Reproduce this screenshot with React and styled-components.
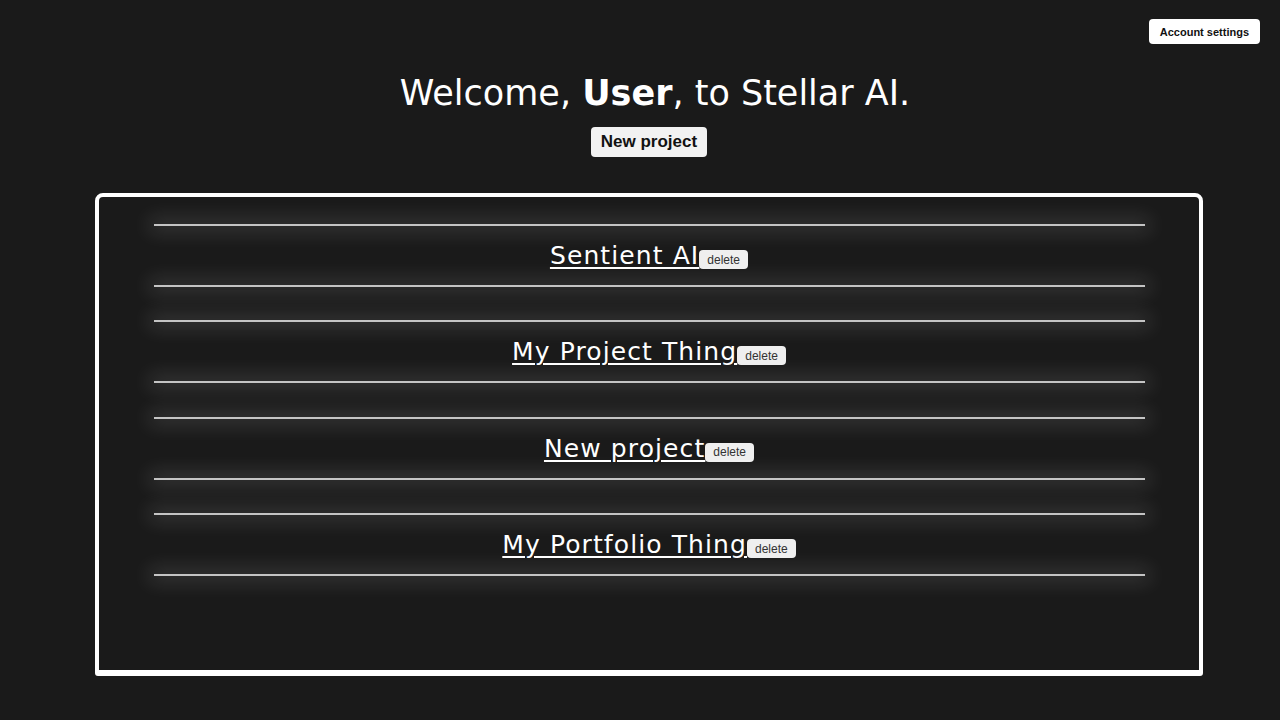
import React from "react";
import styled, { createGlobalStyle } from "styled-components";

const GlobalStyle = createGlobalStyle`
  html, body { margin: 0; padding: 0; background: #1a1a1a; }
  body { font-family: "Liberation Sans", Arial, sans-serif; color: #fff; }
`;

const Page = styled.div`
  min-height: 720px;
  display: flex;
  flex-direction: column;
  align-items: center;
  padding-left: 18px;
  box-sizing: border-box;
`;

const TopBar = styled.div`
  align-self: stretch;
  display: flex;
  justify-content: flex-end;
  padding: 19px 20px 0 0;
  height: 25px;
`;

const SmallButton = styled.button`
  font-family: "Liberation Sans", Arial, sans-serif;
  font-weight: 700;
  font-size: 11px;
  color: #111;
  background: #fff;
  border: none;
  border-radius: 4px;
  padding: 0 11px;
  height: 25px;
  cursor: pointer;
`;

const Heading = styled.h1`
  margin: 29px 0 0 12px;
  font-family: "DejaVu Sans", sans-serif;
  font-weight: 400;
  font-size: 35px;
  letter-spacing: 0px;
  line-height: 40px;
  color: #fff;
  b { font-weight: 700; }
`;

const NewButton = styled.button`
  margin-top: 14px;
  font-family: "Liberation Sans", Arial, sans-serif;
  font-weight: 700;
  font-size: 17px;
  color: #111;
  background: #f2f2f2;
  border: none;
  border-radius: 4px;
  height: 30px;
  padding: 0 10px;
  cursor: pointer;
`;

const Panel = styled.section`
  margin-top: 36px;
  width: 1108px;
  height: 483px;
  box-sizing: border-box;
  border: 4px solid #fff;
  border-bottom-width: 6px;
  border-radius: 8px 8px 3px 3px;
  padding-top: 27px;
  display: flex;
  flex-direction: column;
  align-items: center;
  gap: 33.4px;
`;

const Row = styled.div`
  width: 991px;
  display: flex;
  flex-direction: column;
`;

const Line = styled.div`
  height: 2px;
  background: #c4c4c4;
  box-shadow: 0 0 20px 5px rgba(255, 255, 255, 0.16);
`;

const RowBody = styled.div`
  height: 59px;
  display: flex;
  justify-content: center;
  align-items: center;
`;

const Title = styled.a`
  font-family: "DejaVu Sans", sans-serif;
  font-size: 25px;
  letter-spacing: 1.1px;
  color: #fff;
  text-decoration: underline;
  text-decoration-thickness: 2px;
  text-underline-offset: 3px;
  cursor: pointer;
`;

const DeleteButton = styled.button`
  margin-top: 8px;
  font-family: "Liberation Sans", Arial, sans-serif;
  font-size: 12px;
  color: #333;
  background: #efefef;
  border: none;
  border-radius: 4px;
  height: 19px;
  padding: 0 8px;
  cursor: pointer;
`;

const projects = ["Sentient AI", "My Project Thing", "New project", "My Portfolio Thing"];

export default function App() {
  return (
    <>
      <GlobalStyle />
      <Page>
        <TopBar>
          <SmallButton>Account settings</SmallButton>
        </TopBar>
        <Heading>
          Welcome, <b>User</b>, to Stellar AI.
        </Heading>
        <NewButton>New project</NewButton>
        <Panel>
          {projects.map((p) => (
            <Row key={p}>
              <Line />
              <RowBody>
                <Title>{p}</Title>
                <DeleteButton>delete</DeleteButton>
              </RowBody>
              <Line />
            </Row>
          ))}
        </Panel>
      </Page>
    </>
  );
}
